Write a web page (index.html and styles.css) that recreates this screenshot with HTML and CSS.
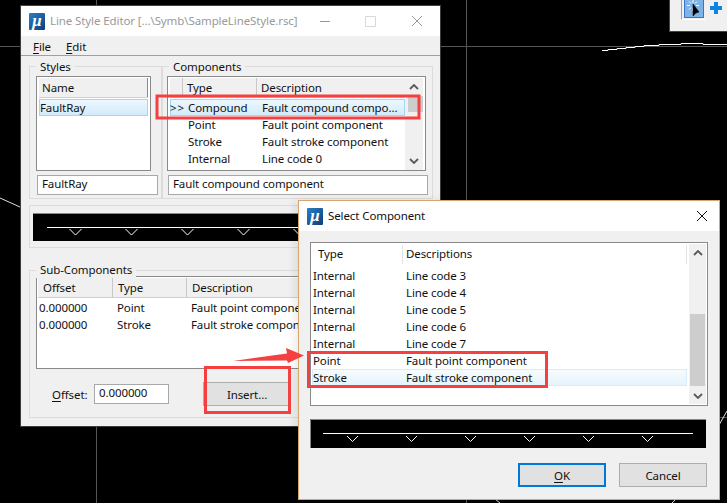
FILE: index.html
```html
<!DOCTYPE html>
<html lang="en">
<head>
<meta charset="utf-8">
<title>Line Style Editor</title>
<link rel="stylesheet" href="styles.css">
</head>
<body>
<div class="desktop">
  <svg class="cad" width="727" height="503" viewBox="0 0 727 503">
    <path class="axis" d="M0 46.5H727M96.5 0V503M466.5 0V503M700 417.5H727"/>
    <polyline class="geo" points="602,50.5 608,50.5 608,49.5 617,49.5 617,48.5 626,48.5 626,47.5 635,47.5 635,46.5 644,46.5 644,45.5 659,45.5 659,44.5 681,44.5 681,43.5 703,43.5 703,44.5 727,44.5"/>
    <path class="geo thin" d="M0 198L20 207M719 425L727 411M495 499L500 503M672 503L676 499"/>
  </svg>

  <aside class="toolbar">
    <div class="tool-rail">
      <div class="tool-btn">
        <svg width="20" height="18" viewBox="0 0 20 18">
          <path class="spark" d="M9 1V4M9 9V12M3 6.500H6M12 6.500H15M5 2.500L7 4.500M13 2.500L11 4.500M5 10.500L7 8.500"/>
          <path class="pointer" d="M9 5L9 17L12 14L15 13Z"/>
        </svg>
      </div>
    </div>
    <svg class="plus" width="14" height="14" viewBox="0 0 14 14"><path d="M7 1V13M1 7H13"/></svg>
  </aside>

  <section class="window main-win">
    <header class="titlebar">
      <span class="logo">μ</span>
      <span class="title inactive">Line Style Editor [...\Symb\SampleLineStyle.rsc]</span>
      <span class="controls">
        <svg width="103" height="12" viewBox="0 0 103 12">
          <path class="ctl" d="M0 6.500H10M92 1L102 11M102 1L92 11"/>
          <path class="ctl off" d="M45.500 1.500H55.500V11.500H45.500Z"/>
        </svg>
      </span>
    </header>
    <nav class="menubar"><span><u>F</u>ile</span><span><u>E</u>dit</span></nav>
    <div class="content">
      <div class="top-groups">
        <div class="group styles-group">
          <span class="legend">Styles</span>
          <div class="list styles-list">
            <div class="head"><span class="hcell name-col">Name</span></div>
            <div class="row sel"><span>FaultRay</span></div>
          </div>
          <div class="input">FaultRay</div>
        </div>
        <div class="group comps-group">
          <span class="legend">Components</span>
          <div class="list comps-list">
            <div class="list-body">
              <div class="head">
                <span class="hcell c-mark"></span>
                <span class="hcell c-type">Type</span>
                <span class="hcell c-desc">Description</span>
              </div>
              <div class="row sel"><span class="c-mark mark">&gt;&gt;</span><span class="c-type">Compound</span><span class="c-desc">Fault compound compo...</span></div>
              <div class="row"><span class="c-mark"></span><span class="c-type">Point</span><span class="c-desc">Fault point component</span></div>
              <div class="row"><span class="c-mark"></span><span class="c-type">Stroke</span><span class="c-desc">Fault stroke component</span></div>
              <div class="row"><span class="c-mark"></span><span class="c-type">Internal</span><span class="c-desc">Line code 0</span></div>
            </div>
            <div class="scroll scroll-main">
              <svg class="chev" width="10" height="6" viewBox="0 0 10 6"><path d="M1 5L5 1L9 5"/></svg>
              <div class="track"><div class="thumb thumb-main"></div></div>
              <svg class="chev" width="10" height="6" viewBox="0 0 10 6"><path d="M1 1L5 5L9 1"/></svg>
            </div>
          </div>
          <div class="input wide">Fault compound component</div>
        </div>
      </div>

      <div class="group preview-group">
        <svg class="preview" width="395" height="28" viewBox="0 0 395 28">
          <path class="pedge" d="M0 .5H395"/>
          <path class="pline" d="M14 14.500H395"/>
          <path class="pline" d="M36.500 16L42.500 22L48.500 16M92.500 16L98.500 22L104.500 16M148.500 16L154.500 22L160.500 16M204.500 16L210.500 22L216.500 16M260.500 16L266.500 22L272.500 16"/>
        </svg>
      </div>

      <div class="group sub-group">
        <span class="legend">Sub-Components</span>
        <div class="list sub-list">
          <div class="head">
            <span class="hcell s-off">Offset</span>
            <span class="hcell s-type">Type</span>
            <span class="hcell s-desc">Description</span>
          </div>
          <div class="row"><span class="s-off-v">0.000000</span><span class="s-type">Point</span><span class="s-desc">Fault point component</span></div>
          <div class="row"><span class="s-off-v">0.000000</span><span class="s-type">Stroke</span><span class="s-desc">Fault stroke component</span></div>
        </div>
        <div class="offset-row">
          <span class="offset-label"><u>O</u>ffset:</span>
          <div class="input offset-input">0.000000</div>
          <div class="btn insert-btn">Insert...</div>
        </div>
      </div>
    </div>
  </section>

  <section class="window select-win">
    <header class="titlebar">
      <span class="logo">μ</span>
      <span class="title">Select Component</span>
      <span class="controls">
        <svg width="12" height="12" viewBox="0 0 12 12"><path class="ctl dark" d="M1 1L11 11M11 1L1 11"/></svg>
      </span>
    </header>
    <div class="select-body">
      <div class="list select-list">
        <div class="list-body">
          <div class="head white">
            <span class="hcell d-pad"></span>
            <span class="hcell d-type">Type</span>
            <span class="hcell d-desc">Descriptions</span>
          </div>
          <div class="rows">
            <div class="row"><span class="d-t">Internal</span><span>Line code 3</span></div>
            <div class="row"><span class="d-t">Internal</span><span>Line code 4</span></div>
            <div class="row"><span class="d-t">Internal</span><span>Line code 5</span></div>
            <div class="row"><span class="d-t">Internal</span><span>Line code 6</span></div>
            <div class="row"><span class="d-t">Internal</span><span>Line code 7</span></div>
            <div class="row"><span class="d-t">Point</span><span>Fault point component</span></div>
            <div class="row sel"><span class="d-t">Stroke</span><span>Fault stroke component</span></div>
          </div>
        </div>
        <div class="scroll scroll-select">
          <svg class="chev" width="10" height="6" viewBox="0 0 10 6"><path d="M1 5L5 1L9 5"/></svg>
          <div class="track"><div class="thumb thumb-select"></div></div>
          <svg class="chev" width="10" height="6" viewBox="0 0 10 6"><path d="M1 1L5 5L9 1"/></svg>
        </div>
      </div>
      <svg class="preview preview-select" width="396" height="29" viewBox="0 0 396 29">
        <path class="pedge" d="M.5 29V.5H396"/>
        <path class="pline" d="M13 14.500H383"/>
        <path class="pline" d="M37 17L42.500 22.500L48 17M96 17L101.500 22.500L107 17M155 17L160.500 22.500L166 17M214 17L219.500 22.500L225 17M273 17L278.500 22.500L284 17M332 17L337.500 22.500L343 17"/>
      </svg>
      <div class="actions">
        <div class="btn ok-btn"><span><u>O</u>K</span></div>
        <div class="btn cancel-btn">Cancel</div>
      </div>
    </div>
  </section>

  <svg class="marks" width="727" height="503" viewBox="0 0 727 503">
    <rect class="mark-box" x="157" y="96" width="262" height="22"/>
    <rect class="mark-box" x="205.500" y="367.500" width="84" height="45"/>
    <rect class="mark-box" x="308.500" y="352.500" width="238" height="34"/>
    <path class="mark-arrow" d="M233 361L287 353.500L286 348L304 355.500L288 363L287 360.500Z"/>
  </svg>
</div>
</body>
</html>
```
FILE: styles.css
```css
* { box-sizing: border-box; }
html, body { margin: 0; padding: 0; }
body {
  width: 727px;
  height: 503px;
  overflow: hidden;
  background: #000;
  font-family: "Noto Sans", "Open Sans", sans-serif;
  font-size: 11.500px;
  letter-spacing: -.1px;
  line-height: 17px;
  color: #111;
}
u { text-decoration-thickness: 1px; text-underline-offset: 2px; }

.desktop { position: relative; width: 727px; height: 503px; overflow: hidden; }
.cad, .marks { position: absolute; left: 0; top: 0; }
.axis { stroke: #555; stroke-width: 1; fill: none; }
.geo { stroke: #fff; stroke-width: 1; fill: none; }
.thin { stroke: #ddd; }

/* top-right toolbar */
.toolbar {
  position: absolute;
  left: 669px;
  top: 0;
  width: 58px;
  height: 32px;
  background: #f0f0f0;
  border-left: 1px solid #444;
  border-bottom: 1px solid #444;
  display: flex;
  align-items: flex-start;
  padding-left: 11px;
}
.tool-rail {
  height: 20px;
  border-left: 1px solid #a0a0a0;
  border-bottom: 1px solid #fff;
  padding-left: 2px;
  width: 25px;
}
.tool-btn { width: 20px; height: 18px; background: #7db3e6; border: 1px solid #3c74c4; border-top: 0; overflow: hidden; }
.tool-btn svg { display: block; margin: -1px 0 0 -1px; }
.spark { stroke: #fff; stroke-width: 1; fill: none; }
.pointer { fill: #000; stroke: #000; stroke-width: .5; }
.plus { margin: 1px 0 0 3px; }
.plus path { stroke: #0a85e0; stroke-width: 4; fill: none; }

/* windows */
.window { position: absolute; background: #f0f0f0; display: flex; flex-direction: column; }
.main-win { left: 20px; top: 5px; width: 421px; height: 422px; border: 1px solid #3c3c3c; border-top-color: #444; }
.select-win { left: 298px; top: 200px; width: 422px; height: 300px; border: 1px solid #d6a76c; box-shadow: -4px 0 8px rgba(0,0,0,.08); }
.titlebar { height: 30px; background: #fff; display: flex; align-items: center; flex: none; }
.logo {
  width: 16px;
  height: 17px;
  margin-left: 8px;
  border-radius: 1px;
  background: linear-gradient(135deg, #2a7fc4, #0c3f7c);
  color: #fff;
  font: italic bold 17px/15px "Liberation Serif", serif;
  text-align: center;
  flex: none;
}
.title { margin-left: 5px; padding-bottom: 2px; white-space: nowrap; }
.inactive { color: #999; }
.controls { margin-left: auto; padding-right: 17px; display: flex; }
.select-win .controls { padding-right: 11px; }
.ctl { stroke: #999; stroke-width: 1; fill: none; }
.ctl.off { stroke: #d8d8d8; }
.ctl.dark { stroke: #111; }

.menubar {
  height: 20px;
  flex: none;
  display: flex;
  gap: 15px;
  padding: 2px 0 0 12px;
  border-bottom: 1px solid #a0a0a0;
}

.content { padding: 10px 7px 0 8px; display: flex; flex-direction: column; }
.top-groups { display: flex; }
.group { position: relative; border: 1px solid #dcdcdc; }
.legend { position: absolute; top: -9px; left: 6px; padding: 0 4px; background: #f0f0f0; }
.sub-group .legend { top: -10px; }

.styles-group { width: 133px; height: 133px; padding: 9px 0 0 6px; }
.comps-group { width: 271px; height: 133px; padding: 9px 0 0 4px; }
.styles-list { width: 115px; height: 95px; }
.comps-list { width: 259px; height: 95px; }
.list { background: #fff; border: 1px solid #8a8a8a; display: flex; }
.styles-list { flex-direction: column; padding: 1px 2px 0; }
.comps-list { padding: 1px 2px 0 2px; }
.list-body { flex: 1; min-width: 0; }
.head { height: 20px; display: flex; background: #f0f0f0; border-bottom: 1px solid #d0d0d0; flex: none; }
.hcell { height: 19px; padding-top: 1px; border-right: 1px solid #c8c8c8; white-space: nowrap; }
.name-col { flex: 1; padding-left: 3px; border-right-color: #8a8a8a; }
.row { height: 17px; display: flex; white-space: nowrap; border: 1px solid transparent; line-height: 16px; }
.head + .row { margin-top: 1px; }
.row.sel { background: linear-gradient(#edf7fe, #d2ebfb); border-color: #9fd8f5; }
.c-mark { width: 13px; flex: none; }
.mark { margin-left: -1px; margin-right: 1px; letter-spacing: 1px; }
.c-type { width: 74px; flex: none; padding-left: 4px; }
.c-desc { flex: 1; padding-left: 4px; }
.hcell.c-desc { border-right: 0; }

.scroll { flex: none; display: flex; flex-direction: column; align-items: center; background: #f0f0f0; }
.scroll-main { width: 18px; padding-top: 6px; padding-bottom: 6px; }
.scroll-select { width: 17px; margin: 1px 1px 1px 2px; padding: 6px 0 5px; }
.track { flex: 1; width: 100%; position: relative; }
.thumb { background: #cdcdcd; }
.thumb-main { height: 16px; margin: 6px 0 0 3px; }
.thumb-select { position: absolute; left: 1px; right: 1px; top: 58px; height: 72px; }
.chev { display: block; flex: none; }
.chev path { stroke: #5a5a5a; stroke-width: 1.800; fill: none; }

.input { background: #fff; border: 1px solid #a8a8a8; height: 20px; margin-top: 4px; padding-left: 4px; line-height: 15px; white-space: nowrap; }
.styles-group .input { width: 121px; margin-left: 1px; }
.input.wide { width: 260px; margin-left: 1px; }

.preview-group { width: 404px; height: 43px; margin-top: 6px; padding: 7px 0 0 3px; }
.preview { display: block; background: #000; }
.pline { stroke: #fff; stroke-width: 1; fill: none; }
.pedge { stroke: #888; stroke-width: 1; fill: none; }

.sub-group { width: 404px; height: 148px; margin-top: 22px; padding: 5px 0 0 6px; }
.sub-list { width: 390px; height: 93px; flex-direction: column; padding: 1px 0 0 0; }
.sub-list .head { margin: 0 0 0 1px; }
.hcell.s-off { width: 75px; padding-left: 5px; }
.hcell.s-type { width: 74px; padding-left: 5px; }
.hcell.s-desc { flex: 1; padding-left: 5px; border-right: 0; }
.sub-list .head + .row { margin-top: 1px; }
.s-off-v { width: 78px; flex: none; padding-left: 1px; }
.row .s-type { width: 74px; flex: none; padding-left: 1px; }
.row .s-desc { flex: 1; padding-left: 1px; }

.offset-row { display: flex; align-items: center; margin-top: 13px; padding-left: 16px; }
.offset-label { width: 42px; flex: none; }
.offset-input { width: 75px; height: 20px; margin: 0; padding-left: 4px; }
.btn { background: #e1e1e1; border: 1px solid #adadad; display: flex; align-items: center; justify-content: center; }
.insert-btn { width: 88px; height: 24px; margin-left: 34px; }

/* select dialog */
.select-body { padding: 11px 12px 0 11px; display: flex; flex-direction: column; }
.select-list { width: 398px; height: 164px; }
.select-list .list-body { padding: 2px 0 0 1px; }
.head.white { background: #fff; border-bottom: 0; height: 20px; }
.head.white .hcell { border-right: 1px solid #e4e4e4; padding-top: 0; }
.d-pad { width: 0; border: 0 !important; }
.d-type { width: 91px; padding-left: 6px; }
.d-desc { flex: 1; padding-left: 3px; }
.rows { margin-top: 2px; }
.d-t { width: 93px; flex: none; }
.select-list .row.sel { background: linear-gradient(#f6fbfe, #e6f4fc); border-color: #d6edf9; }
.preview-select { margin-top: 13px; }
.actions { display: flex; justify-content: flex-end; gap: 13px; margin-top: 15px; }
.ok-btn, .cancel-btn { width: 88px; height: 24px; }
.ok-btn { border: 2px solid #0078d7; }

.mark-box { fill: none; stroke: #f44040; stroke-width: 3; }
.mark-arrow { fill: #f44040; }
```
